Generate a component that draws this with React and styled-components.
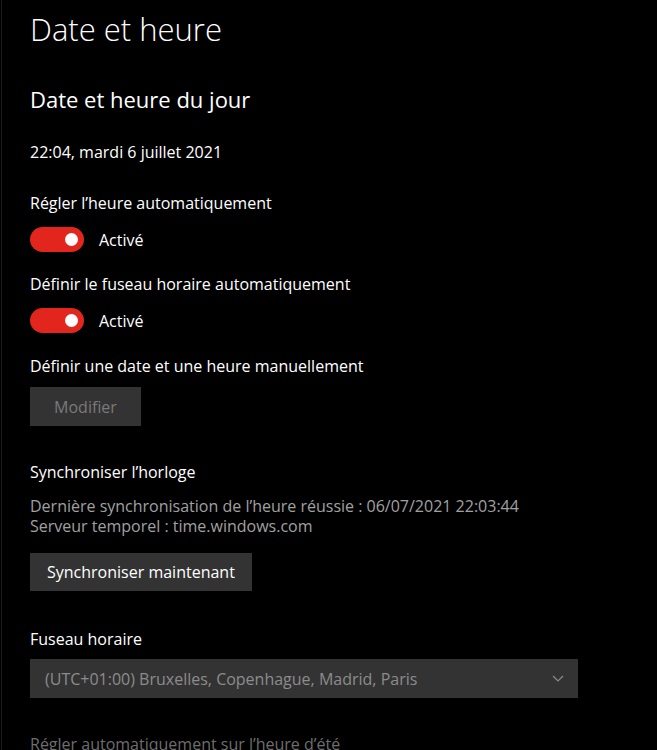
import React from 'react';
import styled, { createGlobalStyle } from 'styled-components';

const GlobalStyle = createGlobalStyle`
  html, body {
    margin: 0;
    padding: 0;
    background: #000;
  }
  body {
    font-family: "Open Sans", "Noto Sans", sans-serif;
    color: #fff;
    overflow: hidden;
  }
`;

const Page = styled.div`
  width: 657px;
  height: 750px;
  box-sizing: border-box;
  border-left: 1px solid #1b1b1b;
  margin-left: 1px;
  padding: 10px 0 0 28px;
  overflow: hidden;
`;

const Title = styled.h1`
  margin: 0;
  font-size: 31px;
  line-height: 38px;
  font-weight: 300;
`;

const Section = styled.h2`
  margin: ${p => p.$top}px 0 0;
  font-size: 22px;
  line-height: 28px;
  font-weight: 400;
`;

const Text = styled.div`
  margin-top: ${p => p.$top || 0}px;
  font-size: 16px;
  line-height: 20px;
  color: ${p => p.$color || '#fff'};
`;

const ToggleRow = styled.div`
  display: flex;
  align-items: center;
  gap: 15px;
  margin-top: ${p => p.$top}px;
  font-size: 16px;
`;

const Track = styled.div`
  width: 54px;
  height: 25px;
  border-radius: 13px;
  background: #e3261d;
  display: flex;
  align-items: center;
  justify-content: flex-end;
  padding-right: 6px;
  box-sizing: border-box;
`;

const Knob = styled.div`
  width: 13px;
  height: 13px;
  border-radius: 50%;
  background: #fff;
`;

const Button = styled.button`
  display: block;
  margin-top: ${p => p.$top}px;
  min-width: 111px;
  height: ${p => p.$h}px;
  padding: 0 17px;
  border: none;
  background: #333;
  color: ${p => (p.disabled ? '#7a7a7a' : '#fff')};
  font-family: inherit;
  font-size: 16px;
`;

const Select = styled.div`
  margin-top: 10px;
  width: 548px;
  height: 39px;
  background: #333;
  display: flex;
  align-items: center;
  justify-content: space-between;
  padding: 0 14px 0 15px;
  box-sizing: border-box;
  color: #8c8c8c;
  font-size: 16px;
`;

const Chevron = () => (
  <svg width="12" height="7" viewBox="0 0 12 7">
    <path d="M1 1l5 5 5-5" fill="none" stroke="#8c8c8c" strokeWidth="1.2" />
  </svg>
);

const Toggle = ({ top }) => (
  <ToggleRow $top={top}>
    <Track><Knob /></Track>
    <span>Activé</span>
  </ToggleRow>
);

export default function App() {
  return (
    <Page>
      <GlobalStyle />
      <Title>Date et heure</Title>
      <Section $top={37}>Date et heure du jour</Section>
      <Text $top={29}>22:04, mardi 6 juillet 2021</Text>
      <Text $top={31}>Régler l’heure automatiquement</Text>
      <Toggle top={14} />
      <Text $top={22}>Définir le fuseau horaire automatiquement</Text>
      <Toggle top={14} />
      <Text $top={23}>Définir une date et une heure manuellement</Text>
      <Button $top={11} $h={39} disabled>Modifier</Button>
      <Text $top={36}>Synchroniser l’horloge</Text>
      <Text $top={14} $color="#a0a0a0">
        Dernière synchronisation de l’heure réussie : 06/07/2021 22:03:44
        <br />
        Serveur temporel : time.windows.com
      </Text>
      <Button $top={17} $h={38}>Synchroniser maintenant</Button>
      <Text $top={38}>Fuseau horaire</Text>
      <Select>
        <span>(UTC+01:00) Bruxelles, Copenhague, Madrid, Paris</span>
        <Chevron />
      </Select>
      <Text $top={36} $color="#6e6e6e">Régler automatiquement sur l’heure d’été</Text>
    </Page>
  );
}
